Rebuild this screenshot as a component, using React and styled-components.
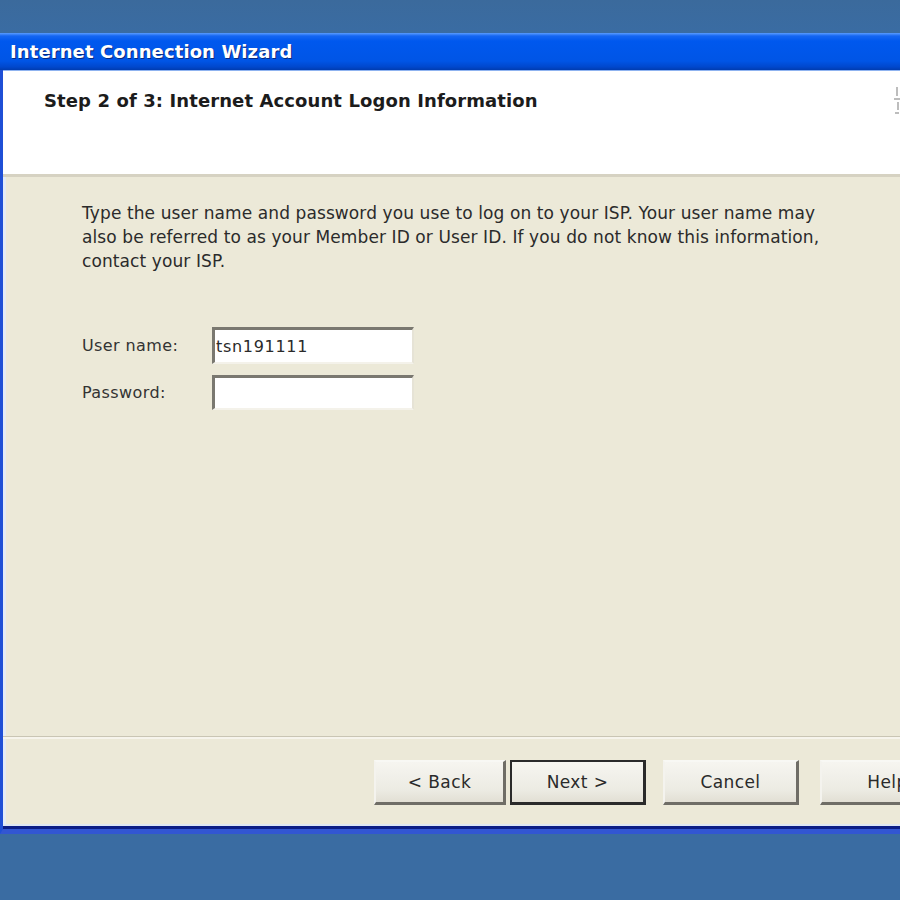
import styled, { createGlobalStyle } from 'styled-components';

const GlobalStyle = createGlobalStyle`
  html, body {
    margin: 0;
    padding: 0;
    overflow: hidden;
    background: #3a6ca2;
  }
  body {
    font-family: "DejaVu Sans", "Liberation Sans", sans-serif;
  }
`;

const Desktop = styled.div`
  width: 900px;
  height: 900px;
  background: linear-gradient(#3b6a9c, #3a6ca3 33px, #3a6ca2);
  padding-top: 33px;
  box-sizing: border-box;
  overflow: hidden;
`;

const Window = styled.div`
  width: 930px;
  height: 801px;
  display: flex;
  flex-direction: column;
  box-sizing: border-box;
  padding-bottom: 5px;
  border-left: 3px solid #1f4fd6;
  border-bottom: 5px solid #3256d2;
  box-shadow: inset 0 -3px 0 #0b1d86, inset 0 -5px 0 #dde6f3, inset 3px 0 0 #e4ebf6;
  background: #ece9d8;
`;

const TitleBar = styled.div`
  height: 37px;
  flex: none;
  display: flex;
  align-items: center;
  padding-left: 10px;
  margin-left: -3px;
  background: linear-gradient(#5a9cff 0px, #1566f2 3px, #0058ee 8px, #0055e6 28px, #0047cc 34px, #003cb0 37px);
  color: #fff;
  font-size: 18px;
  font-weight: bold;
  letter-spacing: 0.1px;
  text-shadow: 1px 1px 0 #0a2a80;
`;

const Header = styled.div`
  height: 107px;
  flex: none;
  display: flex;
  align-items: flex-start;
  background: #fff;
  border-top: 1px solid #8fb3f0;
  border-bottom: 3px solid #d6d2c2;
  box-sizing: border-box;
`;

const HeaderTitle = styled.div`
  padding: 19px 0 0 41px;
  font-size: 18px;
  font-weight: bold;
  color: #1c1c1c;
  letter-spacing: 0.1px;
`;

const HeaderIcon = styled.svg`
  margin: 14px 0 0 auto;
`;

const Content = styled.div`
  flex: 1;
  padding: 24px 40px 0 79px;
  color: #2b2b2b;
  font-size: 17px;
`;

const Intro = styled.p`
  margin: 0;
  line-height: 24px;
  letter-spacing: 0.1px;
  white-space: nowrap;
`;

const Form = styled.div`
  display: grid;
  grid-template-columns: 130px 202px;
  row-gap: 11px;
  margin-top: 54px;
  align-items: center;
`;

const Label = styled.div`
  font-size: 16px;
  color: #333;
  letter-spacing: 0.4px;
`;

const Field = styled.div`
  height: ${p => p.h}px;
  box-sizing: border-box;
  background: #fff;
  border-top: 3px solid #7a7870;
  border-left: 3px solid #7a7870;
  border-right: 2px solid #e6e3d6;
  border-bottom: 2px solid #f4f2ea;
  display: flex;
  align-items: center;
  padding-left: 1px;
  font-size: 16px;
  color: #2a2a2a;
  letter-spacing: 0.7px;
`;

const Separator = styled.div`
  flex: none;
  height: 1px;
  background: #c9c5b4;
  border-bottom: 2px solid #f6f4ec;
`;

const Footer = styled.div`
  flex: none;
  height: 85px;
  display: flex;
  align-items: flex-start;
  padding: 21px 0 0 371px;
  box-sizing: border-box;
`;

const Button = styled.div`
  flex: none;
  width: ${p => p.w}px;
  height: 45px;
  margin-left: ${p => p.gap || 0}px;
  box-sizing: border-box;
  display: flex;
  align-items: center;
  justify-content: center;
  font-size: 17px;
  color: #2a2a2a;
  letter-spacing: 0.4px;
  background: linear-gradient(#f6f5f0, #ecebe3 70%, #e2dfd4);
  border-top: 2px solid #f8f8f4;
  border-left: 2px solid #f4f3ee;
  border-right: 3px solid ${p => (p.isDefault ? '#2a2a2a' : '#6f6d66')};
  border-bottom: 3px solid ${p => (p.isDefault ? '#2a2a2a' : '#6f6d66')};
  ${p => p.isDefault && `
    border-top-color: #2a2a2a;
    border-left-color: #2a2a2a;
  `}
`;

const buttons = [
  { label: '< Back', w: 132 },
  { label: 'Next >', w: 136, gap: 4, isDefault: true },
  { label: 'Cancel', w: 136, gap: 17 },
  { label: 'Help', w: 136, gap: 21 },
];

const App = () => (
  <Desktop>
    <GlobalStyle />
    <Window>
      <TitleBar>Internet Connection Wizard</TitleBar>
      <Header>
        <HeaderTitle>Step 2 of 3: Internet Account Logon Information</HeaderTitle>
        <HeaderIcon width="40" height="44" viewBox="0 0 40 44">
          <path d="M7 2v9M4 14h7M8 17v8M5 28h4" stroke="#bdbdbd" strokeWidth="2" fill="none" />
        </HeaderIcon>
      </Header>
      <Content>
        <Intro>
          Type the user name and password you use to log on to your ISP. Your user name may
          <br />
          also be referred to as your Member ID or User ID. If you do not know this information,
          <br />
          contact your ISP.
        </Intro>
        <Form>
          <Label>User name:</Label>
          <Field h={37}>tsn191111</Field>
          <Label>Password:</Label>
          <Field h={35} />
        </Form>
      </Content>
      <Separator />
      <Footer>
        {buttons.map(b => (
          <Button key={b.label} w={b.w} gap={b.gap} isDefault={b.isDefault}>
            {b.label}
          </Button>
        ))}
      </Footer>
    </Window>
  </Desktop>
);

export default App;
